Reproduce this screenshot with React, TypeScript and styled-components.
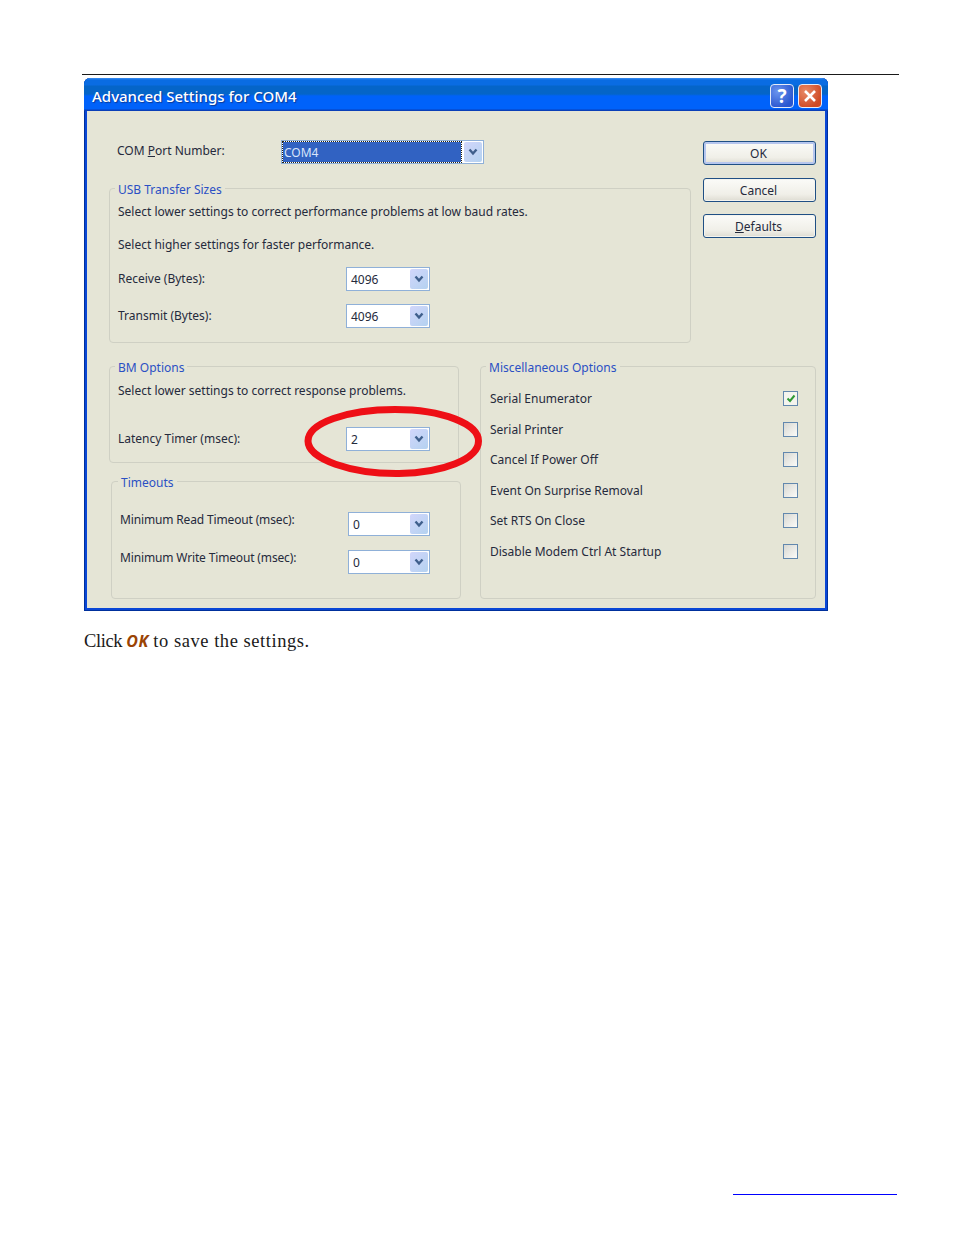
import styled, { createGlobalStyle } from "styled-components";

const GlobalStyle = createGlobalStyle`
  html, body {
    margin: 0;
    background: #ffffff;
  }
`

const Page = styled.div`
  width: 954px;
  height: 1235px;
  box-sizing: border-box;
  padding: 74px 55px 0 82px;
  overflow: hidden;
`

const HeaderRule = styled.hr`
  margin: 0;
  border: 0;
  height: 1px;
  background: #1a1a1a;
`

const Dialog = styled.div`
  position: relative;
  width: 744px;
  height: 533px;
  margin: 3px 0 0 2px;
  box-sizing: border-box;
  display: flex;
  flex-direction: column;
  border-radius: 6px 6px 0 0;
  background: #0a47d6;
  font-family: "Noto Sans", sans-serif;
  font-size: 12px;
  color: #252a3c;
  box-shadow: inset 1px 0 #00309c, inset -1px 0 #00309c, inset 0 -1px #00309c;
`

const TitleBar = styled.div`
  height: 33px;
  flex: none;
  display: flex;
  align-items: center;
  gap: 4px;
  padding: 3px 6px 0 8px;
  box-sizing: border-box;
  border-radius: 6px 6px 0 0;
  background: linear-gradient(
    to bottom,
    #3b8cf0 0,
    #0a6ce2 2px,
    #0a6ce2 7px,
    #0565c8 8px,
    #0565c8 16px,
    #0062fa 18px,
    #0062fa 31px,
    #0a3fb8 32px
  );
`

const TitleText = styled.span`
  flex: 1;
  font-size: 15px;
  font-weight: 500;
  color: #ffffff;
  text-shadow: 1px 1px 1px #0c3a94;
`

const CaptionButton = styled.span<{ $tone: "help" | "close" }>`
  width: 24px;
  height: 24px;
  box-sizing: border-box;
  display: flex;
  align-items: center;
  justify-content: center;
  border: 1px solid #e6ecf8;
  border-radius: 4px;
  color: #ffffff;
  font-size: 19px;
  font-weight: 700;
  background: ${(p) =>
    p.$tone === "help"
      ? "radial-gradient(circle at 30% 30%, #6a94ee, #2a57d0 75%)"
      : "radial-gradient(circle at 30% 30%, #e88a68, #cf4a24 75%)"};
`

const Client = styled.div`
  flex: 1;
  margin: 0 3px 3px;
  padding: 29px 9px 0 22px;
  background: #e5e5d6;
  display: flex;
  flex-direction: column;
`

const UpperSection = styled.div`
  display: grid;
  grid-template-columns: 582px 113px;
  column-gap: 12px;
`

const LowerSection = styled.div`
  display: grid;
  grid-template-columns: 352px 336px;
  column-gap: 19px;
  margin-top: 16px;
`

const LeftStack = styled.div`
  display: flex;
  flex-direction: column;
`

const PortRow = styled.div`
  display: grid;
  grid-template-columns: 164px auto;
  justify-content: start;
  align-items: start;
  padding-left: 8px;
  line-height: 22px;
`

const Group = styled.fieldset<{ $top?: number; $left?: number; $width?: number }>`
  margin: ${(p) => p.$top ?? 0}px 0 0 ${(p) => p.$left ?? 0}px;
  width: ${(p) => (p.$width ? `${p.$width}px` : "auto")};
  min-width: 0;
  box-sizing: border-box;
  padding: 0 8px;
  border: 1px solid #cfd0c4;
  border-radius: 4px;
`

const GroupTitle = styled.legend<{ $inset?: number }>`
  margin-left: ${(p) => p.$inset ?? -3}px;
  padding: 0 3px;
  line-height: 14px;
  color: #2b50c4;
  transform: translateY(2px);
`

const Note = styled.p<{ $top: number }>`
  margin: ${(p) => p.$top}px 0 0;
  line-height: 16px;
`

const FieldRow = styled.div<{ $top: number; $bottom?: number; $labelRaised?: boolean }>`
  display: grid;
  grid-template-columns: 228px auto;
  justify-content: start;
  align-items: ${(p) => (p.$labelRaised ? "start" : "center")};
  margin-top: ${(p) => p.$top}px;
  margin-bottom: ${(p) => p.$bottom ?? 0}px;
  letter-spacing: ${(p) => (p.$labelRaised ? "-0.15px" : "0")};
`

const FieldLabel = styled.span<{ $raised?: boolean }>`
  padding-bottom: 2px;
  margin-top: ${(p) => (p.$raised ? "-1px" : "0")};
`

const Combo = styled.div<{ $width: number }>`
  width: ${(p) => p.$width}px;
  height: 24px;
  box-sizing: border-box;
  display: flex;
  align-items: center;
  justify-content: space-between;
  gap: 3px;
  padding: 1px;
  border: 1px solid #8fb0d8;
  background: #ffffff;
`

const ComboValue = styled.span<{ $selected?: boolean }>`
  flex: 1;
  align-self: stretch;
  display: flex;
  align-items: center;
  padding: ${(p) => (p.$selected ? "2px 0 0 1px" : "0 0 0 3px")};
  color: ${(p) => (p.$selected ? "#d8e4fa" : "#252a3c")};
  background: ${(p) => (p.$selected ? "#3162c2" : "transparent")};
  outline: ${(p) => (p.$selected ? "1px dotted #2a2410" : "none")};
`

const ComboArrow = styled.span`
  width: 18px;
  align-self: stretch;
  flex: none;
  display: flex;
  align-items: center;
  justify-content: center;
  border-radius: 2px;
  background: linear-gradient(135deg, #d2d6fb, #b4d2f0);
`

const CommandColumn = styled.div`
  display: flex;
  flex-direction: column;
  gap: 12.5px;
  padding-top: 1px;
`

const CommandButton = styled.button<{ $primary?: boolean }>`
  height: 24px;
  padding: 1px 2px 0 0;
  font: inherit;
  color: #252a3c;
  border: 1px solid #1f4f84;
  border-radius: 3px;
  background: linear-gradient(to bottom, #fbfbf8, #f0efe8 70%, #dedcd2);
  box-shadow: ${(p) =>
    p.$primary ? "inset 0 0 0 2px #b6c6ee" : "inset 0 0 0 1px #f4f4ee"};
`

const Access = styled.span`
  text-decoration: underline;
`

const OptionRow = styled.div`
  height: 30.5px;
  display: flex;
  align-items: center;
  justify-content: space-between;
  padding: 0 9px 0 1px;
`

const OptionList = styled.div`
  padding: 10.5px 0 29.5px;
`

const CheckBox = styled.span<{ $checked?: boolean }>`
  width: 15px;
  height: 15px;
  box-sizing: border-box;
  display: flex;
  align-items: center;
  justify-content: center;
  border: 1px solid #6288ae;
  background: ${(p) =>
    p.$checked ? "#f4f4ee" : "linear-gradient(135deg, #d8d8d2, #fbfbf8)"};
`

const Highlight = styled.svg`
  position: absolute;
  left: 219px;
  top: 326px;
  pointer-events: none;
`

const BodyText = styled.p`
  margin: 19px 0 0 2px;
  font-family: "Liberation Serif", serif;
  font-size: 18.5px;
  line-height: 22px;
  letter-spacing: -0.4px;
  color: #1a1a1a;
`

const Term = styled.em`
  font-family: "Open Sans", sans-serif;
  font-weight: 700;
  font-size: 16px;
  letter-spacing: 0.6px;
  color: #9a4304;
`

const BodyTail = styled.span`
  letter-spacing: 0.55px;
`

const FooterLink = styled.a`
  display: block;
  width: 164px;
  height: 1px;
  margin: 542px 0 0 651px;
  background: #0000ff;
`

function ArrowGlyph() {
  return (
    <svg width="10" height="8" viewBox="0 0 10 8">
      <path d="M1.5 1.5 5 5.5 8.5 1.5" fill="none" stroke="#3f5f8c" strokeWidth="2.4" />
    </svg>
  )
}

function ComboBox({ value, width, selected }: { value: string; width: number; selected?: boolean }) {
  return (
    <Combo $width={width}>
      <ComboValue $selected={selected}>{value}</ComboValue>
      <ComboArrow>
        <ArrowGlyph />
      </ComboArrow>
    </Combo>
  )
}

const options = [
  { label: "Serial Enumerator", checked: true },
  { label: "Serial Printer" },
  { label: "Cancel If Power Off" },
  { label: "Event On Surprise Removal" },
  { label: "Set RTS On Close" },
  { label: "Disable Modem Ctrl At Startup" },
]

export default function App(): JSX.Element {
  return (
    <Page>
      <GlobalStyle />
      <HeaderRule />
      <Dialog>
        <TitleBar>
          <TitleText>Advanced Settings for COM4</TitleText>
          <CaptionButton $tone="help">?</CaptionButton>
          <CaptionButton $tone="close">
            <svg width="14" height="14" viewBox="0 0 14 14">
              <path d="M2 2 12 12M12 2 2 12" stroke="#ffffff" strokeWidth="2.6" />
            </svg>
          </CaptionButton>
        </TitleBar>
        <Client>
          <UpperSection>
            <LeftStack>
              <PortRow>
                <span>
                  COM <Access>P</Access>ort Number:
                </span>
                <ComboBox value="COM4" width={203} selected />
              </PortRow>
              <Group $top={17}>
                <GroupTitle>USB Transfer Sizes</GroupTitle>
                <Note $top={9}>Select lower settings to correct performance problems at low baud rates.</Note>
                <Note $top={17}>Select higher settings for faster performance.</Note>
                <FieldRow $top={14}>
                  <FieldLabel>Receive (Bytes):</FieldLabel>
                  <ComboBox value="4096" width={84} />
                </FieldRow>
                <FieldRow $top={13} $bottom={14}>
                  <FieldLabel>Transmit (Bytes):</FieldLabel>
                  <ComboBox value="4096" width={84} />
                </FieldRow>
              </Group>
            </LeftStack>
            <CommandColumn>
              <CommandButton $primary>OK</CommandButton>
              <CommandButton>Cancel</CommandButton>
              <CommandButton>
                <Access>D</Access>efaults
              </CommandButton>
            </CommandColumn>
          </UpperSection>
          <LowerSection>
            <LeftStack>
              <Group $width={350}>
                <GroupTitle>BM Options</GroupTitle>
                <Note $top={10}>Select lower settings to correct response problems.</Note>
                <FieldRow $top={28} $bottom={11}>
                  <FieldLabel>Latency Timer (msec):</FieldLabel>
                  <ComboBox value="2" width={84} />
                </FieldRow>
              </Group>
              <Group $top={11} $left={2} $width={350}>
                <GroupTitle $inset={-2}>Timeouts</GroupTitle>
                <FieldRow $top={24} $labelRaised>
                  <FieldLabel $raised>Minimum Read Timeout (msec):</FieldLabel>
                  <ComboBox value="0" width={82} />
                </FieldRow>
                <FieldRow $top={14} $bottom={24} $labelRaised>
                  <FieldLabel $raised>Minimum Write Timeout (msec):</FieldLabel>
                  <ComboBox value="0" width={82} />
                </FieldRow>
              </Group>
            </LeftStack>
            <Group>
              <GroupTitle>Miscellaneous Options</GroupTitle>
              <OptionList>
                {options.map((option) => (
                  <OptionRow key={option.label}>
                    <span>{option.label}</span>
                    <CheckBox $checked={option.checked}>
                      {option.checked && (
                        <svg width="10" height="9" viewBox="0 0 10 9">
                          <path d="M1.5 4.5 4 7 8.5 1.5" fill="none" stroke="#2f9a35" strokeWidth="2" />
                        </svg>
                      )}
                    </CheckBox>
                  </OptionRow>
                ))}
              </OptionList>
            </Group>
          </LowerSection>
        </Client>
        <Highlight width="182" height="76" viewBox="0 0 182 76">
          <path
            d="M5 37C5 19 44 5.5 92 5.5C140 5.5 175.5 20 175.5 37C175.5 55 140 69 96 69.5C48 70 5 55 5 37Z"
            fill="none"
            stroke="#ee0f16"
            strokeWidth="7"
          />
        </Highlight>
      </Dialog>
      <BodyText>
        Click <Term>OK</Term> <BodyTail>to save the settings.</BodyTail>
      </BodyText>
      <FooterLink />
    </Page>
  )
}
